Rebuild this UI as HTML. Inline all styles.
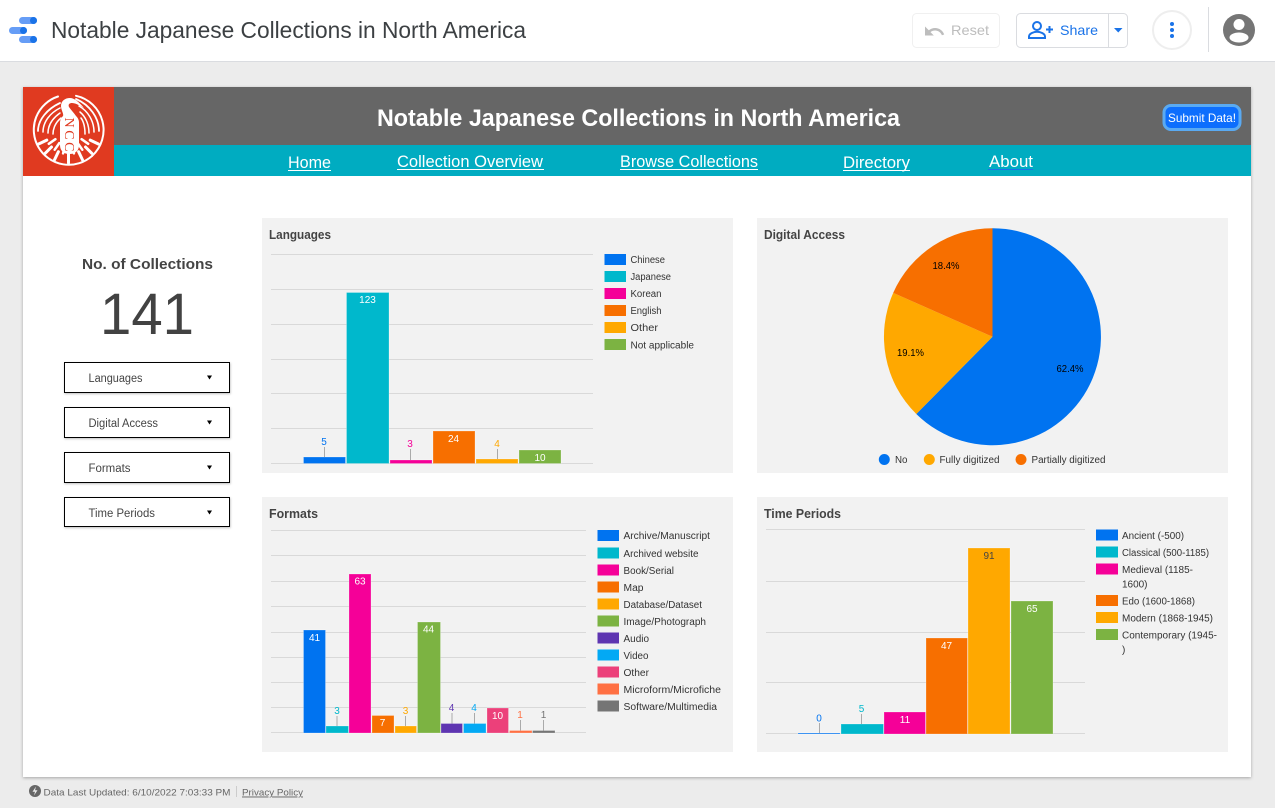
<!DOCTYPE html>
<html lang="en">
<head>
<meta charset="utf-8">
<title>Notable Japanese Collections in North America</title>
<style>
html,body{margin:0;padding:0;width:1275px;height:808px;overflow:hidden;background:#ececec}
svg{display:block}
text{font-family:"Liberation Sans",Arial,sans-serif}
.ct{font-size:13px;font-weight:bold;fill:#444}
.lg{font-size:10px;fill:#333}
.v{font-size:10px;text-anchor:middle}
.w{fill:#fff}
.dd{font-size:11.5px;fill:#444}
.ll{stroke:#aaa;stroke-width:1;fill:none}
.grid{stroke:#d9d9d9;stroke-width:1;fill:none}
.bars rect{stroke:rgba(255,255,255,.3);stroke-width:.8}
.nav{font-size:17px;fill:#fff}
</style>
</head>
<body>
<svg width="1275" height="808" viewBox="0 0 1275 808" xmlns="http://www.w3.org/2000/svg">
<defs>
<filter id="sh" x="-5%" y="-5%" width="110%" height="110%"><feDropShadow dx="0" dy="1" stdDeviation="1.500" flood-color="#000" flood-opacity=".3"/></filter>
<filter id="sh2" x="-10%" y="-20%" width="120%" height="150%"><feDropShadow dx="0.500" dy="1" stdDeviation="1" flood-color="#000" flood-opacity=".25"/></filter>
</defs>

<!-- top bar -->
<rect width="1275" height="808" fill="#ececec"/>
<rect width="1275" height="61" fill="#fff"/>
<rect y="61" width="1275" height="1" fill="#dadce0"/>
<rect x="19" y="17" width="18" height="7" rx="3.500" fill="#669df6"/><circle cx="33.500" cy="20.500" r="3.500" fill="#1a73e8"/>
<rect x="9" y="27" width="18" height="7" rx="3.500" fill="#669df6"/><circle cx="23.500" cy="30.500" r="3.500" fill="#1a73e8"/>
<rect x="19" y="36" width="18" height="7" rx="3.500" fill="#669df6"/><circle cx="33.500" cy="39.500" r="3.500" fill="#1a73e8"/>
<text x="51" y="38" font-size="23" fill="#3c4043" textLength="475" lengthAdjust="spacingAndGlyphs">Notable Japanese Collections in North America</text>

<rect x="912.500" y="13.500" width="87" height="34" rx="4" fill="#fff" stroke="#f0f0f0"/>
<path d="M925 26.500v9h8.800l-3.300-3.400c1.300-1 2.900-1.600 4.600-1.600 3.100 0 5.800 2 6.800 4.800l2.300-.8c-1.300-3.800-4.900-6.500-9.100-6.500-2.400 0-4.600.9-6.300 2.300z" fill="#bdbdbd"/>
<text x="951" y="35" font-size="14" fill="#bdbdbd" textLength="38" lengthAdjust="spacingAndGlyphs">Reset</text>

<rect x="1016.500" y="13.500" width="111" height="34" rx="4" fill="#fff" stroke="#dadce0"/>
<path d="M1108.500 13v35" stroke="#dadce0"/>
<circle cx="1037" cy="26" r="4" fill="none" stroke="#1a73e8" stroke-width="2"/>
<path d="M1029 38v-1.500c0-3 5-4.700 8-4.700s8 1.700 8 4.700V38z" fill="none" stroke="#1a73e8" stroke-width="2"/>
<path d="M1046 29.500h7M1049.500 26v7" stroke="#1a73e8" stroke-width="2" fill="none"/>
<text x="1060" y="35" font-size="14" fill="#1a73e8" textLength="38" lengthAdjust="spacingAndGlyphs">Share</text>
<path d="M1114 28h8.500l-4.250 4.500z" fill="#1a73e8"/>

<circle cx="1172" cy="30" r="19" fill="#fff" stroke="#eeeeee" stroke-width="2"/>
<circle cx="1172" cy="24" r="2" fill="#1a73e8"/><circle cx="1172" cy="30" r="2" fill="#1a73e8"/><circle cx="1172" cy="36" r="2" fill="#1a73e8"/>
<rect x="1208" y="7" width="1" height="45" fill="#dadce0"/>
<circle cx="1239" cy="30" r="16" fill="#757575"/>
<circle cx="1239" cy="24.500" r="5.500" fill="#fff"/>
<ellipse cx="1239" cy="37.500" rx="9.500" ry="5" fill="#fff"/>

<!-- card -->
<rect x="23" y="87" width="1228" height="690" fill="#fff" filter="url(#sh)"/>
<rect x="114" y="87" width="1137" height="58" fill="#666"/>
<rect x="114" y="145" width="1137" height="31" fill="#00acc1"/>
<rect x="23" y="87" width="91" height="89" fill="#e03a20"/>

<!-- crest -->
<g fill="none" stroke="#fff" stroke-linecap="round">
<path d="M58 96.500A35 35 0 1 0 92 156" stroke-width="2"/>
<path d="M76 95.800A35 35 0 0 1 92 156" stroke-width="2"/>
<path d="M60 103C47 109 38 120 38 131" stroke-width="1.800"/>
<path d="M60 108C50 113 43 122 43 132" stroke-width="1.500"/>
<path d="M60 113C53 118 48 125 48 133" stroke-width="1.500"/>
<path d="M61 118C56 122 53 128 53 134" stroke-width="1.500"/>
<path d="M76 99C90 105 99 118 99 131" stroke-width="1.800"/>
<path d="M79 106C88 111 94 121 94 132" stroke-width="1.500"/>
<path d="M80 112C86 117 89 125 89 133" stroke-width="1.500"/>
<path d="M81 118C84 122 85 128 85 134" stroke-width="1.500"/>
<path d="M90.200 140.100L98.400 144M85.500 147L91.800 153.300M78.600 151.700L82.500 159.900M68.500 154V163M58.400 151.700L54.500 159.900M51.500 147L45.200 153.300M46.800 140.100L38.600 144" stroke-width="3"/>
<path d="M81.600 139.200L88.200 143.800M77.700 143.100L82.300 149.700M72.100 145.600L73.900 153.400M64.900 145.600L63.100 153.400M59.300 143.100L54.700 149.700M55.400 139.200L48.800 143.800" stroke-width="2.500"/>
<path d="M68.500 147v3" stroke-width="3"/>
</g>
<path d="M61 106c0-5 4-8 9-8 4 0 8 3 14 10-5-3-9-5-12-5-3 0-4 2-3 4 2 3 5 6 7 9 2 2 3 4 3 7v22c0 6-4 9-9.500 9S60 151 60 145v-22c0-3 1-5 3-7 1-2-2-6-2-10z" fill="#fff"/>
<text transform="translate(65 117.500) rotate(90)" font-size="14" fill="#e03a20" style="font-family:'Liberation Serif',serif" textLength="34" lengthAdjust="spacing">NCC</text>

<!-- header text -->
<text x="377" y="126" font-size="24" font-weight="bold" fill="#fff" textLength="523" lengthAdjust="spacingAndGlyphs">Notable Japanese Collections in North America</text>
<rect x="1164" y="105.500" width="76" height="24" rx="7" fill="#0d6efd" stroke="#5aaaf2" stroke-width="3"/>
<text x="1168" y="122" font-size="12" fill="#fff" textLength="68" lengthAdjust="spacingAndGlyphs">Submit Data!</text>

<text class="nav" x="288" y="168" textLength="43" lengthAdjust="spacingAndGlyphs">Home</text><rect x="288" y="170" width="43" height="1" fill="#fff"/>
<text class="nav" x="397" y="167" textLength="146" lengthAdjust="spacingAndGlyphs">Collection Overview</text><rect x="397" y="169" width="147" height="1" fill="#fff"/>
<text class="nav" x="620" y="167" textLength="138" lengthAdjust="spacingAndGlyphs">Browse Collections</text><rect x="620" y="169" width="138" height="1" fill="#fff"/>
<text class="nav" x="843" y="168" textLength="67" lengthAdjust="spacingAndGlyphs">Directory</text><rect x="843" y="170" width="67" height="1" fill="#fff"/>
<text class="nav" x="989" y="167" textLength="44" lengthAdjust="spacingAndGlyphs">About</text><rect x="988" y="169" width="45" height="1" fill="#1a73e8"/>

<!-- left column -->
<text x="82" y="269" font-size="15" font-weight="bold" fill="#444" textLength="131" lengthAdjust="spacingAndGlyphs">No. of Collections</text>
<text x="100" y="334" font-size="58" fill="#424242" textLength="94" lengthAdjust="spacingAndGlyphs">141</text>

<g fill="#fff" stroke="#000" stroke-width="1" filter="url(#sh2)">
<rect x="64.500" y="362.500" width="165" height="30"/>
<rect x="64.500" y="407.500" width="165" height="30"/>
<rect x="64.500" y="452.500" width="165" height="30"/>
<rect x="64.500" y="497.500" width="165" height="29"/>
</g>
<text class="dd" x="88.500" y="382" textLength="54" lengthAdjust="spacingAndGlyphs">Languages</text>
<text class="dd" x="88.500" y="427" textLength="69.500" lengthAdjust="spacingAndGlyphs">Digital Access</text>
<text class="dd" x="88.500" y="472" textLength="42" lengthAdjust="spacingAndGlyphs">Formats</text>
<text class="dd" x="88.500" y="517" textLength="66.500" lengthAdjust="spacingAndGlyphs">Time Periods</text>
<path d="M207 375.500h5l-2.500 4zM207 420.500h5l-2.500 4zM207 465.500h5l-2.500 4zM207 510.500h5l-2.500 4z" fill="#000"/>

<!-- panels -->
<rect x="262" y="218" width="471" height="255" fill="#f2f2f2"/>
<rect x="757" y="218" width="471" height="255" fill="#f2f2f2"/>
<rect x="262" y="497" width="471" height="255" fill="#f2f2f2"/>
<rect x="757" y="497" width="471" height="255" fill="#f2f2f2"/>

<!-- Languages -->
<text class="ct" x="269" y="239" textLength="62" lengthAdjust="spacingAndGlyphs">Languages</text>
<path class="grid" d="M271 254.500h322M271 289.500h322M271 324.500h322M271 359.500h322M271 393.500h322M271 428.500h322M271 463.500h322"/>
<g class="bars">
<rect x="303.500" y="457" width="42" height="6.500" fill="#0073f0"/>
<rect x="346.500" y="292.500" width="42.500" height="171" fill="#00b8cc"/>
<rect x="390" y="460" width="42" height="3.500" fill="#f50098"/>
<rect x="433" y="431" width="42" height="32.500" fill="#f76f00"/>
<rect x="476" y="459" width="42" height="4.500" fill="#ffa800"/>
<rect x="519" y="450" width="42" height="13.500" fill="#7cb342"/>
</g>
<path class="ll" d="M324.500 447v10M410.500 449v11M497.500 449v10"/>
<text class="v" x="324" y="445" fill="#0073f0">5</text>
<text class="v w" x="367.500" y="303">123</text>
<text class="v" x="410" y="447" fill="#f50098">3</text>
<text class="v w" x="453.500" y="442">24</text>
<text class="v" x="497" y="447" fill="#ffa800">4</text>
<text class="v w" x="540" y="461">10</text>
<g>
<rect x="604.500" y="254" width="21.500" height="11" fill="#0073f0"/>
<rect x="604.500" y="271" width="21.500" height="11" fill="#00b8cc"/>
<rect x="604.500" y="288" width="21.500" height="11" fill="#f50098"/>
<rect x="604.500" y="305" width="21.500" height="11" fill="#f76f00"/>
<rect x="604.500" y="322" width="21.500" height="11" fill="#ffa800"/>
<rect x="604.500" y="339" width="21.500" height="11" fill="#7cb342"/>
</g>
<text class="lg" x="630.500" y="263" textLength="34.500" lengthAdjust="spacingAndGlyphs">Chinese</text>
<text class="lg" x="630.500" y="280" textLength="40.500" lengthAdjust="spacingAndGlyphs">Japanese</text>
<text class="lg" x="630.500" y="297" textLength="31" lengthAdjust="spacingAndGlyphs">Korean</text>
<text class="lg" x="630.500" y="314" textLength="31" lengthAdjust="spacingAndGlyphs">English</text>
<text class="lg" x="630.500" y="331" textLength="27.500" lengthAdjust="spacingAndGlyphs">Other</text>
<text class="lg" x="630.500" y="348.500" textLength="63.500" lengthAdjust="spacingAndGlyphs">Not applicable</text>

<!-- Digital Access -->
<text class="ct" x="764" y="239" textLength="81" lengthAdjust="spacingAndGlyphs">Digital Access</text>
<path d="M992.500 336.700V228.200A108.500 108.500 0 1 1 916.300 414Z" fill="#0073f0"/>
<path d="M992.500 336.700L916.300 414A108.500 108.500 0 0 1 893.200 292.900Z" fill="#ffa800"/>
<path d="M992.500 336.700L893.200 292.900A108.500 108.500 0 0 1 992.500 228.200Z" fill="#f76f00"/>
<text class="lg" x="1056.500" y="372" style="fill:#000" textLength="27" lengthAdjust="spacingAndGlyphs">62.4%</text>
<text class="lg" x="897" y="356" style="fill:#000" textLength="27" lengthAdjust="spacingAndGlyphs">19.1%</text>
<text class="lg" x="932.500" y="269" style="fill:#000" textLength="27" lengthAdjust="spacingAndGlyphs">18.4%</text>
<circle cx="884.300" cy="459.500" r="5.500" fill="#0073f0"/>
<circle cx="929.300" cy="459.500" r="5.500" fill="#ffa800"/>
<circle cx="1021" cy="459.500" r="5.500" fill="#f76f00"/>
<text class="lg" x="895" y="463" textLength="12.500" lengthAdjust="spacingAndGlyphs">No</text>
<text class="lg" x="939.500" y="463" textLength="60" lengthAdjust="spacingAndGlyphs">Fully digitized</text>
<text class="lg" x="1031.500" y="463" textLength="74" lengthAdjust="spacingAndGlyphs">Partially digitized</text>

<!-- Formats -->
<text class="ct" x="269" y="518" textLength="49" lengthAdjust="spacingAndGlyphs">Formats</text>
<path class="grid" d="M271 530.500h315M271 555.500h315M271 581.500h315M271 606.500h315M271 632.500h315M271 657.500h315M271 682.500h315M271 707.500h315M271 732.500h315"/>
<g class="bars">
<rect x="303.500" y="630" width="22" height="103" fill="#0073f0"/>
<rect x="326" y="726" width="22.500" height="7" fill="#00b8cc"/>
<rect x="349" y="574" width="22" height="159" fill="#f50098"/>
<rect x="372" y="715.500" width="22" height="17.500" fill="#f76f00"/>
<rect x="395" y="726" width="21.500" height="7" fill="#ffa800"/>
<rect x="417.500" y="622" width="23" height="111" fill="#7cb342"/>
<rect x="441" y="723.500" width="21.500" height="9.500" fill="#5e35b1"/>
<rect x="463.500" y="723.500" width="22.500" height="9.500" fill="#03a9f4"/>
<rect x="487" y="708" width="21.500" height="25" fill="#ec407a"/>
<rect x="509.500" y="730.500" width="22.500" height="2.500" fill="#ff7043"/>
<rect x="532.500" y="730.500" width="22.500" height="2.500" fill="#757575"/>
</g>
<path class="ll" d="M337 716v10M405.500 716v10M452 713v10.500M474.500 713v10.500M520.500 720v10.500M543.500 720v10.500"/>
<text class="v w" x="314.500" y="641">41</text>
<text class="v" x="337" y="714" fill="#00b8cc">3</text>
<text class="v w" x="360" y="584.500">63</text>
<text class="v w" x="382.500" y="726">7</text>
<text class="v" x="405.500" y="714" fill="#ffa800">3</text>
<text class="v w" x="428.500" y="632.500">44</text>
<text class="v" x="451.500" y="711" fill="#5e35b1">4</text>
<text class="v" x="474" y="711" fill="#03a9f4">4</text>
<text class="v w" x="497.500" y="719">10</text>
<text class="v" x="520" y="718" fill="#ff7043">1</text>
<text class="v" x="543.500" y="718" fill="#757575">1</text>
<g>
<rect x="597.500" y="530" width="21.500" height="11" fill="#0073f0"/>
<rect x="597.500" y="547.500" width="21.500" height="11" fill="#00b8cc"/>
<rect x="597.500" y="564.500" width="21.500" height="11" fill="#f50098"/>
<rect x="597.500" y="581.500" width="21.500" height="11" fill="#f76f00"/>
<rect x="597.500" y="598.500" width="21.500" height="11" fill="#ffa800"/>
<rect x="597.500" y="615.500" width="21.500" height="11" fill="#7cb342"/>
<rect x="597.500" y="632.500" width="21.500" height="11" fill="#5e35b1"/>
<rect x="597.500" y="649.500" width="21.500" height="11" fill="#03a9f4"/>
<rect x="597.500" y="666.500" width="21.500" height="11" fill="#ec407a"/>
<rect x="597.500" y="683.500" width="21.500" height="11" fill="#ff7043"/>
<rect x="597.500" y="700.500" width="21.500" height="11" fill="#757575"/>
</g>
<text class="lg" x="623.500" y="539" textLength="86.500" lengthAdjust="spacingAndGlyphs">Archive/Manuscript</text>
<text class="lg" x="623.500" y="557" textLength="75" lengthAdjust="spacingAndGlyphs">Archived website</text>
<text class="lg" x="623.500" y="574" textLength="50.500" lengthAdjust="spacingAndGlyphs">Book/Serial</text>
<text class="lg" x="623.500" y="591" textLength="20" lengthAdjust="spacingAndGlyphs">Map</text>
<text class="lg" x="623.500" y="608" textLength="78.500" lengthAdjust="spacingAndGlyphs">Database/Dataset</text>
<text class="lg" x="623.500" y="625" textLength="82.500" lengthAdjust="spacingAndGlyphs">Image/Photograph</text>
<text class="lg" x="623.500" y="642" textLength="25.500" lengthAdjust="spacingAndGlyphs">Audio</text>
<text class="lg" x="623.500" y="659" textLength="25" lengthAdjust="spacingAndGlyphs">Video</text>
<text class="lg" x="623.500" y="676" textLength="25.500" lengthAdjust="spacingAndGlyphs">Other</text>
<text class="lg" x="623.500" y="693" textLength="97.500" lengthAdjust="spacingAndGlyphs">Microform/Microfiche</text>
<text class="lg" x="623.500" y="710" textLength="93.500" lengthAdjust="spacingAndGlyphs">Software/Multimedia</text>

<!-- Time Periods -->
<text class="ct" x="764" y="518" textLength="77" lengthAdjust="spacingAndGlyphs">Time Periods</text>
<path class="grid" d="M766 529.500h319M766 581.500h319M766 632.500h319M766 682.500h319M766 733.500h319"/>
<g class="bars">
<rect x="798" y="733" width="42" height="1" fill="#0073f0"/>
<rect x="841" y="724" width="42.500" height="10" fill="#00b8cc"/>
<rect x="884" y="712" width="41.500" height="22" fill="#f50098"/>
<rect x="926" y="638" width="41.500" height="96" fill="#f76f00"/>
<rect x="968" y="548" width="42" height="186" fill="#ffa800"/>
<rect x="1011" y="601" width="42" height="133" fill="#7cb342"/>
</g>
<path class="ll" d="M819.500 723v10M861.500 714v10"/>
<text class="v" x="819" y="721.500" fill="#0073f0">0</text>
<text class="v" x="861.500" y="712" fill="#00b8cc">5</text>
<text class="v w" x="905" y="723">11</text>
<text class="v w" x="946.500" y="649">47</text>
<text class="v" x="989" y="559" fill="#444">91</text>
<text class="v w" x="1032" y="612">65</text>
<g>
<rect x="1096" y="529.500" width="22" height="11" fill="#0073f0"/>
<rect x="1096" y="546.500" width="22" height="11" fill="#00b8cc"/>
<rect x="1096" y="563.500" width="22" height="11" fill="#f50098"/>
<rect x="1096" y="595" width="22" height="11" fill="#f76f00"/>
<rect x="1096" y="612" width="22" height="11" fill="#ffa800"/>
<rect x="1096" y="629" width="22" height="11" fill="#7cb342"/>
</g>
<text class="lg" x="1122" y="539" textLength="62" lengthAdjust="spacingAndGlyphs">Ancient (-500)</text>
<text class="lg" x="1122" y="556" textLength="87" lengthAdjust="spacingAndGlyphs">Classical (500-1185)</text>
<text class="lg" x="1122" y="573" textLength="71" lengthAdjust="spacingAndGlyphs">Medieval (1185-</text>
<text class="lg" x="1122" y="587.500" textLength="25.500" lengthAdjust="spacingAndGlyphs">1600)</text>
<text class="lg" x="1122" y="604.500" textLength="73" lengthAdjust="spacingAndGlyphs">Edo (1600-1868)</text>
<text class="lg" x="1122" y="621.500" textLength="91" lengthAdjust="spacingAndGlyphs">Modern (1868-1945)</text>
<text class="lg" x="1122" y="638.500" textLength="95" lengthAdjust="spacingAndGlyphs">Contemporary (1945-</text>
<text class="lg" x="1122" y="653">)</text>

<!-- footer -->
<circle cx="35" cy="791" r="6" fill="#666"/>
<path d="M36 786.500l-3.500 5.200h2.500l-1 3.800 3.500-5.300h-2.500z" fill="#ececec"/>
<text x="43.500" y="795.500" font-size="9.500" fill="#666" textLength="187" lengthAdjust="spacingAndGlyphs">Data Last Updated: 6/10/2022 7:03:33 PM</text>
<rect x="236" y="786" width="1" height="11" fill="#ccc"/>
<text x="242" y="795.500" font-size="9.500" fill="#666" text-decoration="underline" textLength="61" lengthAdjust="spacingAndGlyphs">Privacy Policy</text>
</svg>
</body>
</html>
